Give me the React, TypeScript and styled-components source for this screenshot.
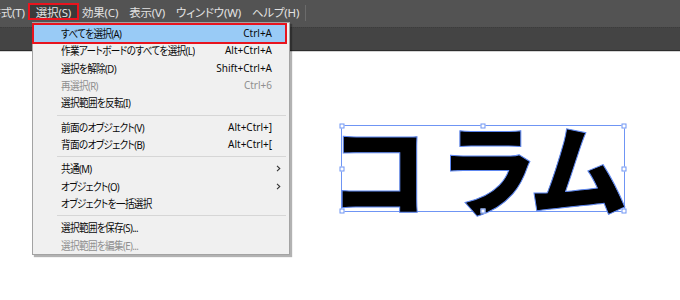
import React from "react";
import styled, { createGlobalStyle } from "styled-components";

const GlobalStyle = createGlobalStyle`
  html, body { margin: 0; padding: 0; width: 680px; height: 300px; overflow: hidden; background: #ffffff; }
  #root { width: 680px; height: 300px; }
`;

const UI_FONT = `"Noto Sans", "Noto Sans CJK JP", sans-serif`;

const Screen = styled.div`
  position: relative;
  width: 680px;
  height: 300px;
  display: flex;
  flex-direction: column;
  overflow: hidden;
  font-family: ${UI_FONT};
  font-feature-settings: "palt";
`;

const MenuBar = styled.div`
  height: 27px;
  flex: none;
  background: #535353;
  display: flex;
  align-items: flex-start;
  margin-left: -16px;
`;

const BarItem = styled.div<{ $active?: boolean }>`
  margin-top: 5px;
  height: 13px;
  padding: 0 5.5px;
  line-height: 15px;
  font-size: 11.5px;
  letter-spacing: -0.2px;
  color: #e2e2e2;
  white-space: nowrap;
  background: ${(p) => (p.$active ? "#3a3a3a" : "transparent")};
  outline: ${(p) => (p.$active ? "2px solid #e8141e" : "none")};
`;

const BarDivider = styled.div`
  width: 1px;
  height: 16px;
  margin: 5px 0 0 0;
  background: #6b6b6b;
`;

const ToolStrip = styled.div`
  height: 22px;
  flex: none;
  background: #444444;
  border-top: 1px dotted #3c3c3c;
  border-bottom: 1px solid #2c2c2c;
`;

const Canvas = styled.div`
  position: relative;
  flex: 1;
  background: #ffffff;
  border-top: 1px solid #d4d4d4;
`;

const Selection = styled.div`
  position: absolute;
  left: 341px;
  top: 73px;
  width: 282px;
  height: 85px;
  border: 1px solid #6f95f4;
`;

const Word = styled.div`
  position: absolute;
  left: -11px;
  top: -30px;
  display: flex;
  font-family: "Noto Sans CJK JP", sans-serif;
  font-weight: 900;
  font-size: 100px;
  line-height: 140px;
  color: #000;
  -webkit-text-stroke: 1px #5e87f0;
  white-space: nowrap;
`;

const Glyph = styled.span<{ $shift: number }>`
  margin-left: ${(p) => p.$shift}px;
`;

const Handle = styled.div<{ $x: number; $y: number }>`
  position: absolute;
  width: 5px;
  height: 5px;
  left: ${(p) => p.$x}px;
  top: ${(p) => p.$y}px;
  transform: translate(-50%, -50%);
  background: #ffffff;
  border: 1px solid #6f95f4;
  box-sizing: border-box;
`;

const Dropdown = styled.div`
  position: absolute;
  left: 32px;
  top: 22px;
  width: 258px;
  box-sizing: border-box;
  padding: 2px 4px 0 1px;
  background: #f0f0f0;
  border: 1px solid #a3a3a3;
  box-shadow: 2px 2px 1px rgba(0, 0, 0, 0.3);
  display: flex;
  flex-direction: column;
`;

const Row = styled.div<{ $hot?: boolean; $disabled?: boolean; $marked?: boolean }>`
  height: 17.33px;
  display: grid;
  grid-template-columns: 1fr auto 13px;
  align-items: center;
  padding-left: 27px;
  background: ${(p) => (p.$hot ? "#99cbf6" : "transparent")};
  color: ${(p) => (p.$disabled ? "#8f8f8f" : "#0a0a0a")};
  outline: ${(p) => (p.$marked ? "2px solid #e8141e" : "none")};
  position: relative;
`;

const Label = styled.span`
  font-size: 11px;
  letter-spacing: -0.7px;
  white-space: nowrap;
  line-height: 17px;
  transform: scaleX(0.87);
  transform-origin: left center;
`;

const Shortcut = styled.span`
  font-size: 10px;
  white-space: nowrap;
  line-height: 17px;
  text-align: right;
`;

const Arrow = styled.span`
  display: flex;
  align-items: center;
  padding-left: 4px;
`;

const Separator = styled.div`
  height: 7px;
  display: flex;
  align-items: center;
  margin-left: 23px;
  margin-right: -1px;
  &::after {
    content: "";
    flex: 1;
    height: 1px;
    background: #d6d6d6;
  }
`;

type Item =
  | { sep: true }
  | { sep?: false; label: string; shortcut?: string; disabled?: boolean; sub?: boolean; hot?: boolean };

const items: Item[] = [
  { label: "すべてを選択(A)", shortcut: "Ctrl+A", hot: true },
  { label: "作業アートボードのすべてを選択(L)", shortcut: "Alt+Ctrl+A" },
  { label: "選択を解除(D)", shortcut: "Shift+Ctrl+A" },
  { label: "再選択(R)", shortcut: "Ctrl+6", disabled: true },
  { label: "選択範囲を反転(I)" },
  { sep: true },
  { label: "前面のオブジェクト(V)", shortcut: "Alt+Ctrl+]" },
  { label: "背面のオブジェクト(B)", shortcut: "Alt+Ctrl+[" },
  { sep: true },
  { label: "共通(M)", sub: true },
  { label: "オブジェクト(O)", sub: true },
  { label: "オブジェクトを一括選択" },
  { sep: true },
  { label: "選択範囲を保存(S)..." },
  { label: "選択範囲を編集(E)...", disabled: true },
];

const menus = ["書式(T)", "選択(S)", "効果(C)", "表示(V)", "ウィンドウ(W)", "ヘルプ(H)"];

const Chevron = () => (
  <svg width="5" height="7" viewBox="0 0 5 7">
    <polyline points="1,0.8 3.8,3.5 1,6.2" fill="none" stroke="#333" strokeWidth="1.1" />
  </svg>
);

const handles: [number, number][] = [
  [0, 0], [141, 0], [282, 0],
  [0, 42.5], [282, 42.5],
  [0, 85], [141, 85], [282, 85],
];

export default function App() {
  return (
    <Screen>
      <GlobalStyle />
      <MenuBar>
        {menus.map((m) => (
          <BarItem key={m} $active={m === "選択(S)"}>
            {m}
          </BarItem>
        ))}
        <BarDivider />
      </MenuBar>
      <ToolStrip />
      <Canvas>
        <Selection>
          <Word>
            <Glyph $shift={0}>コ</Glyph>
            <Glyph $shift={15}>ラ</Glyph>
            <Glyph $shift={-2}>ム</Glyph>
          </Word>
          {handles.map(([x, y], i) => (
            <Handle key={i} $x={x} $y={y} />
          ))}
        </Selection>
      </Canvas>
      <Dropdown>
        {items.map((it, i) =>
          it.sep ? (
            <Separator key={i} />
          ) : (
            <Row key={i} $hot={it.hot} $marked={it.hot} $disabled={it.disabled}>
              <Label>{it.label}</Label>
              <Shortcut>{it.shortcut ?? ""}</Shortcut>
              <Arrow>{it.sub ? <Chevron /> : null}</Arrow>
            </Row>
          )
        )}
      </Dropdown>
    </Screen>
  );
}
